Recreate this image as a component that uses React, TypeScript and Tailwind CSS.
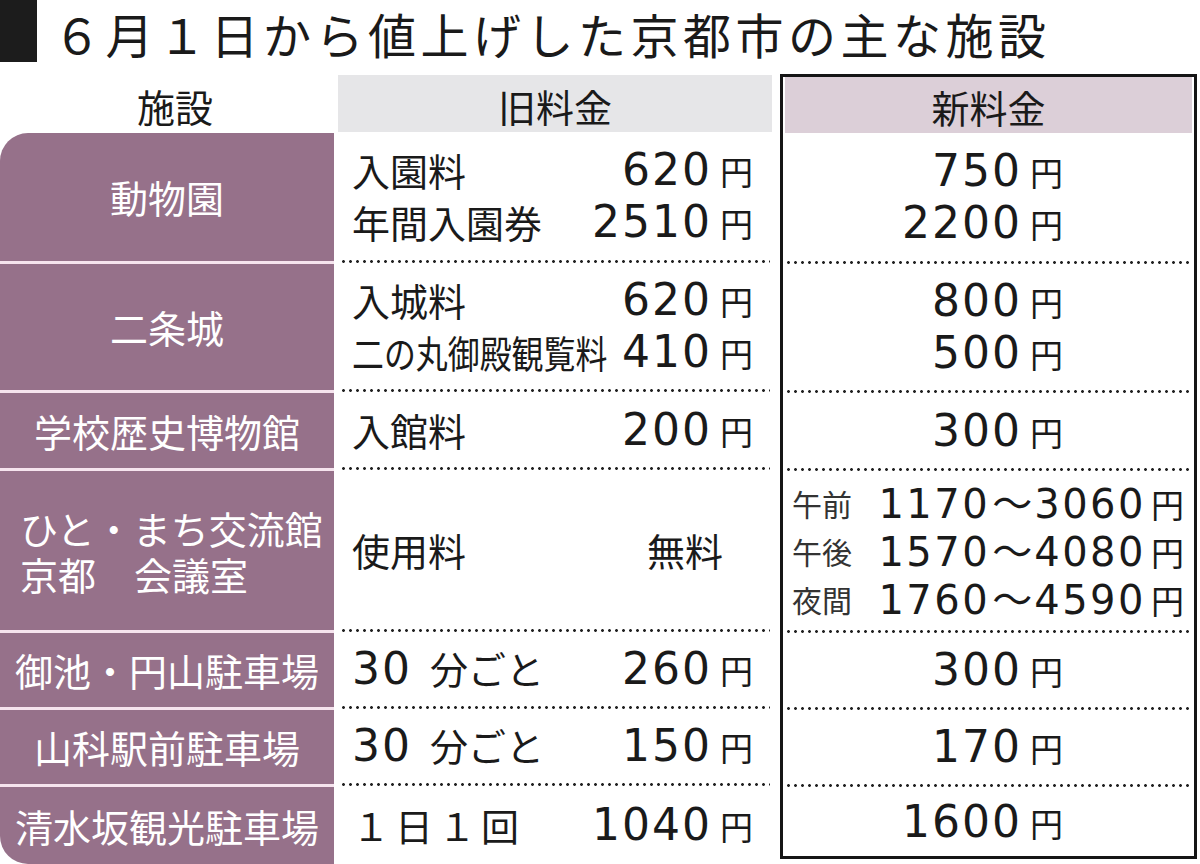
import React from "react"

type OldLine = { label: string; value: string; squeeze?: boolean; num?: string }

interface Row {
  h: string
  hNew: string
  name: string[]
  old?: OldLine[]
  fresh?: string[]
}

const rows: Row[] = [
  {
    h: "h-[128px]",
    hNew: "h-[128px]",
    name: ["動物園"],
    old: [
      { label: "入園料", value: "620" },
      { label: "年間入園券", value: "2510" },
    ],
    fresh: ["750", "2200"],
  },
  {
    h: "h-[129px]",
    hNew: "h-[129px]",
    name: ["二条城"],
    old: [
      { label: "入城料", value: "620" },
      { label: "二の丸御殿観覧料", value: "410", squeeze: true },
    ],
    fresh: ["800", "500"],
  },
  {
    h: "h-[78px]",
    hNew: "h-[78px]",
    name: ["学校歴史博物館"],
    old: [{ label: "入館料", value: "200" }],
    fresh: ["300"],
  },
  {
    h: "h-[162px]",
    hNew: "h-[162px]",
    name: ["ひと・まち交流館", "京都　会議室"],
  },
  {
    h: "h-[77px]",
    hNew: "h-[77px]",
    name: ["御池・円山駐車場"],
    old: [{ label: "分ごと", num: "30", value: "260" }],
    fresh: ["300"],
  },
  {
    h: "h-[77px]",
    hNew: "h-[77px]",
    name: ["山科駅前駐車場"],
    old: [{ label: "分ごと", num: "30", value: "150" }],
    fresh: ["170"],
  },
  {
    h: "h-[80px]",
    hNew: "h-[72px]",
    name: ["清水坂観光駐車場"],
    old: [{ label: "１日１回", value: "1040" }],
    fresh: ["1600"],
  },
]

const cjk = "font-['Noto_Sans_CJK_JP',sans-serif]"
const num = "font-['DejaVu_Sans','Noto_Sans_CJK_JP',sans-serif]"

function Yen({ v }: { v: string }) {
  return (
    <span className="flex items-baseline">
      <span className={`${num} text-[44px] leading-none tracking-[2px]`}>{v}</span>
      <span className={`${cjk} ml-[8px] text-[33px] leading-none`}>円</span>
    </span>
  )
}

function Dots() {
  return (
    <div className="mx-[2px] h-[3px] shrink-0 bg-[radial-gradient(circle,#222_1.2px,transparent_1.6px)] bg-[length:7px_3px] bg-repeat-x" />
  )
}

const ranges = [
  { label: "午前", from: "1170", to: "3060" },
  { label: "午後", from: "1570", to: "4080" },
  { label: "夜間", from: "1760", to: "4590" },
]

export default function App() {
  return (
    <div className={`${cjk} h-[864px] w-[1200px] overflow-hidden bg-white text-[#1a1a1a]`}>
      {/* title */}
      <div className="mb-[12px] flex h-[62px] items-center">
        <div className="h-[62px] w-[37px] shrink-0 bg-[#1c1c1c]" />
        <h1 className="ml-[16px] pt-[4px] text-[48px] leading-none font-normal tracking-[4.5px] whitespace-nowrap">
          ６月１日から値上げした京都市の主な施設
        </h1>
      </div>

      <div className="flex items-start">
        {/* facility column */}
        <div className="flex w-[334px] flex-col">
          <div className="flex h-[59px] items-center justify-center pt-[4px] pl-[16px] text-[38px] leading-none">施設</div>
          <div className="flex flex-col overflow-hidden rounded-l-[28px] bg-[#96718a]">
            {rows.map((r, i) => (
              <div
                key={i}
                className={`${r.h} flex flex-col justify-center text-[38px] leading-[46px] text-white ${
                  i > 0 ? "border-t-[3px] border-[#f6e4ee]" : ""
                } ${r.name.length > 1 ? "items-start pl-[20px]" : "items-center"}`}
              >
                {r.name.map((n) => (
                  <span key={n} className="whitespace-nowrap">{n}</span>
                ))}
              </div>
            ))}
          </div>
        </div>

        {/* old price column */}
        <div className="ml-[4px] flex w-[434px] flex-col">
          <div className="mt-[1px] flex h-[57px] items-center justify-center bg-[#e6e6e8] pt-[4px] text-[38px] leading-none">
            旧料金
          </div>
          {rows.map((r, i) => (
            <div key={i} className={`${r.h} flex flex-col`}>
              {i > 0 && <Dots />}
              <div className="flex flex-1 flex-col justify-center pr-[19px] pl-[14px]">
                {r.old ? (
                  r.old.map((l) => (
                    <div key={l.label + l.value} className="flex h-[52px] items-center justify-between">
                      <span className="flex items-baseline text-[38px] leading-none">
                        {l.num && <span className={`${num} mr-[18px] text-[44px] tracking-[2px]`}>{l.num}</span>}
                        {l.squeeze ? (
                          <span className="inline-block w-[258px]">
                            <span className="inline-block origin-left scale-x-[0.84] whitespace-nowrap">{l.label}</span>
                          </span>
                        ) : (
                          <span className={l.label === "１日１回" ? "tracking-[5px]" : ""}>{l.label}</span>
                        )}
                      </span>
                      <Yen v={l.value} />
                    </div>
                  ))
                ) : (
                  <div className="flex items-center justify-between pr-[30px] text-[38px] leading-none">
                    <span>使用料</span>
                    <span>無料</span>
                  </div>
                )}
              </div>
            </div>
          ))}
        </div>

        {/* new price column */}
        <div className="ml-[8px] flex w-[417px] flex-col border-[3px] border-[#151515]">
          <div className="mx-[2px] flex h-[56px] items-center justify-center bg-[#dccfd8] pt-[4px] text-[38px] leading-none">
            新料金
          </div>
          {rows.map((r, i) => (
            <div key={i} className={`${r.hNew} flex flex-col`}>
              {i > 0 && <Dots />}
              <div className="flex flex-1 flex-col justify-center">
                {r.fresh ? (
                  r.fresh.map((v) => (
                    <div key={v} className="flex h-[52px] items-center justify-end pr-[131px]">
                      <Yen v={v} />
                    </div>
                  ))
                ) : (
                  ranges.map((g) => (
                    <div key={g.label} className="flex h-[48px] items-center justify-between pr-[10px] pl-[9px]">
                      <span className="text-[30px] leading-none text-[#333]">{g.label}</span>
                      <span className="flex items-baseline">
                        <span className={`${num} text-[40px] leading-none tracking-[2.5px]`}>{g.from}</span>
                        <span className="mx-[2px] text-[40px] leading-none">～</span>
                        <span className={`${num} text-[40px] leading-none tracking-[2.5px]`}>{g.to}</span>
                        <span className="ml-[5px] text-[33px] leading-none">円</span>
                      </span>
                    </div>
                  ))
                )}
              </div>
            </div>
          ))}
        </div>
      </div>
    </div>
  )
}
